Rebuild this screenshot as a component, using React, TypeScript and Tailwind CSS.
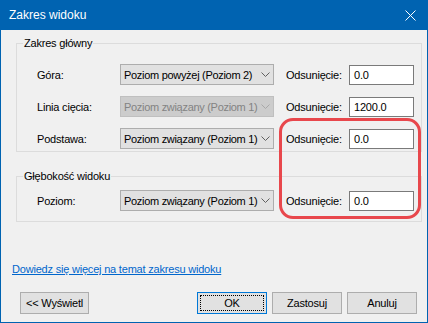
const font = { fontFamily: '"Liberation Sans", Arial, sans-serif' };

type Row = {
  label: string;
  value: string;
  offset: string;
  disabled?: boolean;
};

const mainRows: Row[] = [
  { label: "Góra:", value: "Poziom powyżej (Poziom 2)", offset: "0.0" },
  { label: "Linia cięcia:", value: "Poziom związany (Poziom 1)", offset: "1200.0", disabled: true },
  { label: "Podstawa:", value: "Poziom związany (Poziom 1)", offset: "0.0" },
];

const Chevron = ({ color }: { color: string }) => (
  <svg width="9" height="5" viewBox="0 0 9 5" fill="none">
    <path d="M0.5 0.5 L4.5 4.5 L8.5 0.5" stroke={color} strokeWidth="1" />
  </svg>
);

const RangeRow = ({ row }: { row: Row }) => (
  <div className="flex h-[21px] items-center">
    <span className="w-[83px] text-black">{row.label}</span>
    <div
      className={`flex h-[21px] w-[154px] items-center border ${
        row.disabled ? "border-[#bfbfbf] bg-[#cccccc] text-[#838383]" : "border-[#adadad] bg-[#e1e1e1] text-black"
      }`}
    >
      <span className="flex-1 overflow-hidden whitespace-nowrap pl-[3px] tracking-[-0.3px]">{row.value}</span>
      <span className="flex w-[15px] shrink-0 justify-center">
        <Chevron color={row.disabled ? "#a8a8a8" : "#606060"} />
      </span>
    </div>
    <span className="ml-[12px] w-[63px] text-black">Odsunięcie:</span>
    <div className="flex h-[20px] w-[65px] items-center border border-[#7a7a7a] bg-white pl-[4px] text-black">
      {row.offset}
    </div>
  </div>
);

const Group = ({ title, children, className }: { title: string; children: React.ReactNode; className: string }) => (
  <fieldset className={`ml-[15px] mr-[5px] border border-[#dcdcdc] ${className}`}>
    <legend className="ml-[6px] h-[14px] px-[1px] leading-[14px] text-black">{title}</legend>
    <div className="pl-[20px]">{children}</div>
  </fieldset>
);

const Button = ({ label, width, focused }: { label: string; width: string; focused?: boolean }) => (
  <button
    className={`flex h-[22px] items-center justify-center border bg-[#e1e1e1] p-[2px] text-black ${width} ${
      focused ? "border-[#0078d7]" : "border-[#adadad]"
    }`}
  >
    <span
      className={`flex h-full w-full items-center justify-center ${
        focused ? "border border-dotted border-black" : ""
      }`}
    >
      {label}
    </span>
  </button>
);

export default function App() {
  return (
    <div
      className="relative flex h-[323px] w-[428px] flex-col bg-[#0063b1] px-[1px] pb-[1px] text-[11px] leading-[14px] tracking-[-0.2px]"
      style={font}
    >
      <div className="flex h-[30px] items-center justify-between pl-[8px] pr-[11px] text-[12px] tracking-normal text-white">
        <span>Zakres widoku</span>
        <svg width="11" height="11" viewBox="0 0 11 11" fill="none">
          <path d="M0.5 0.5 L10.5 10.5 M10.5 0.5 L0.5 10.5" stroke="white" strokeWidth="1" />
        </svg>
      </div>

      <div className="flex flex-1 flex-col bg-[#f0f0f0]">
        <Group title="Zakres główny" className="mt-[6px] pb-[2px] pt-[14px]">
          <div className="flex flex-col gap-[11px]">
            {mainRows.map((row) => (
              <RangeRow key={row.label} row={row} />
            ))}
          </div>
        </Group>

        <Group title="Głębokość widoku" className="mt-[17px] pb-[10px] pt-[7px]">
          <RangeRow row={{ label: "Poziom:", value: "Poziom związany (Poziom 1)", offset: "0.0" }} />
        </Group>

        <a className="ml-[11px] mt-[40px] self-start text-[#0066cc] underline" href="#">
          Dowiedz się więcej na temat zakresu widoku
        </a>

        <div className="mt-[16px] flex pl-[19px]">
          <Button label="<< Wyświetl" width="w-[69px]" />
          <div className="ml-auto mr-[10px] flex gap-[5px]">
            <Button label="OK" width="w-[70px]" focused />
            <Button label="Zastosuj" width="w-[70px]" />
            <Button label="Anuluj" width="w-[70px]" />
          </div>
        </div>
      </div>

      <div className="pointer-events-none absolute left-[279px] top-[118px] h-[101px] w-[142px] rounded-[14px] border-[3px] border-[#e8474c]" />
    </div>
  );
}
